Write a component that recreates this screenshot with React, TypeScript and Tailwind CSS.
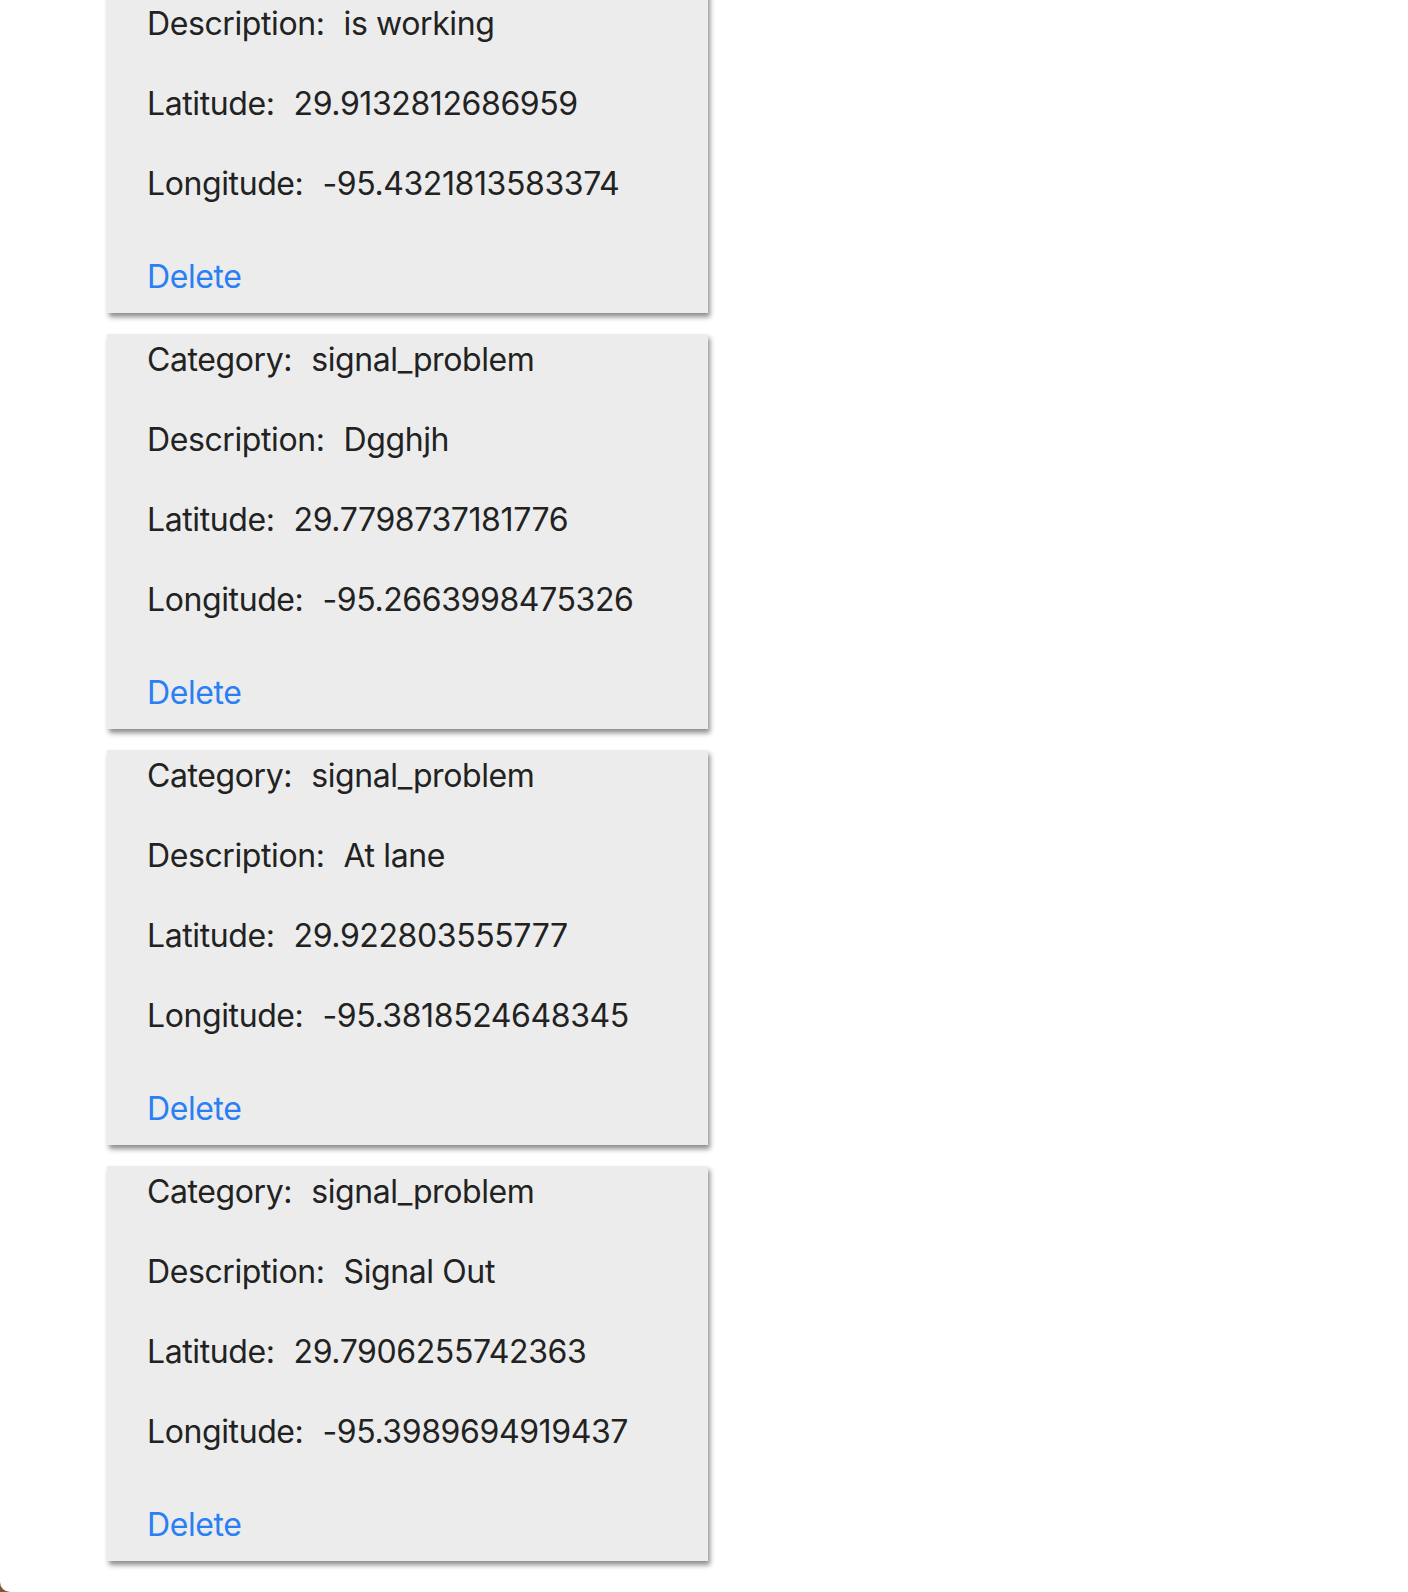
import React from 'react';

const reports = [
  {
    category: "signal_problem",
    description: "is working",
    latitude: "29.9132812686959",
    longitude: "-95.4321813583374"
  },
  {
    category: "signal_problem",
    description: "Dgghjh",
    latitude: "29.7798737181776",
    longitude: "-95.2663998475326"
  },
  {
    category: "signal_problem",
    description: "At lane",
    latitude: "29.922803555777",
    longitude: "-95.3818524648345"
  },
  {
    category: "signal_problem",
    description: "Signal Out",
    latitude: "29.7906255742363",
    longitude: "-95.3989694919437"
  }
];

const Row = ({ label, value }: { label: string; value: string }) => (
  <div className="h-[38px] leading-[38px] mb-[42px] whitespace-nowrap">
    <span className="mr-[19px]">{label}:</span>
    <span>{value}</span>
  </div>
);

const App = () => {
  return (
    <div className="h-[1592px] overflow-hidden bg-[#7a5a33]">
      <div className="h-full bg-white rounded-bl-[10px] overflow-hidden font-['Inter','Liberation_Sans',sans-serif] text-[32px] tracking-[-0.4px] text-[#222]">
        <div className="-mt-[82px] ml-[107px] w-[601px] flex flex-col gap-[21px]">
          {reports.map((r, i) => (
            <div
              key={i}
              className="h-[395px] bg-[#ececec] pl-[40px] pt-[7px] shadow-[2px_4px_5px_rgba(0,0,0,0.45)]"
            >
              <Row label="Category" value={r.category} />
              <Row label="Description" value={r.description} />
              <Row label="Latitude" value={r.latitude} />
              <div className="h-[38px] leading-[38px] whitespace-nowrap">
                <span className="mr-[19px]">Longitude:</span>
                <span>{r.longitude}</span>
              </div>
              <div className="mt-[55px] h-[38px] leading-[38px]">
                <a href="#" className="text-[#2b7ff5]">Delete</a>
              </div>
            </div>
          ))}
        </div>
      </div>
    </div>
  );
};

export default App;
